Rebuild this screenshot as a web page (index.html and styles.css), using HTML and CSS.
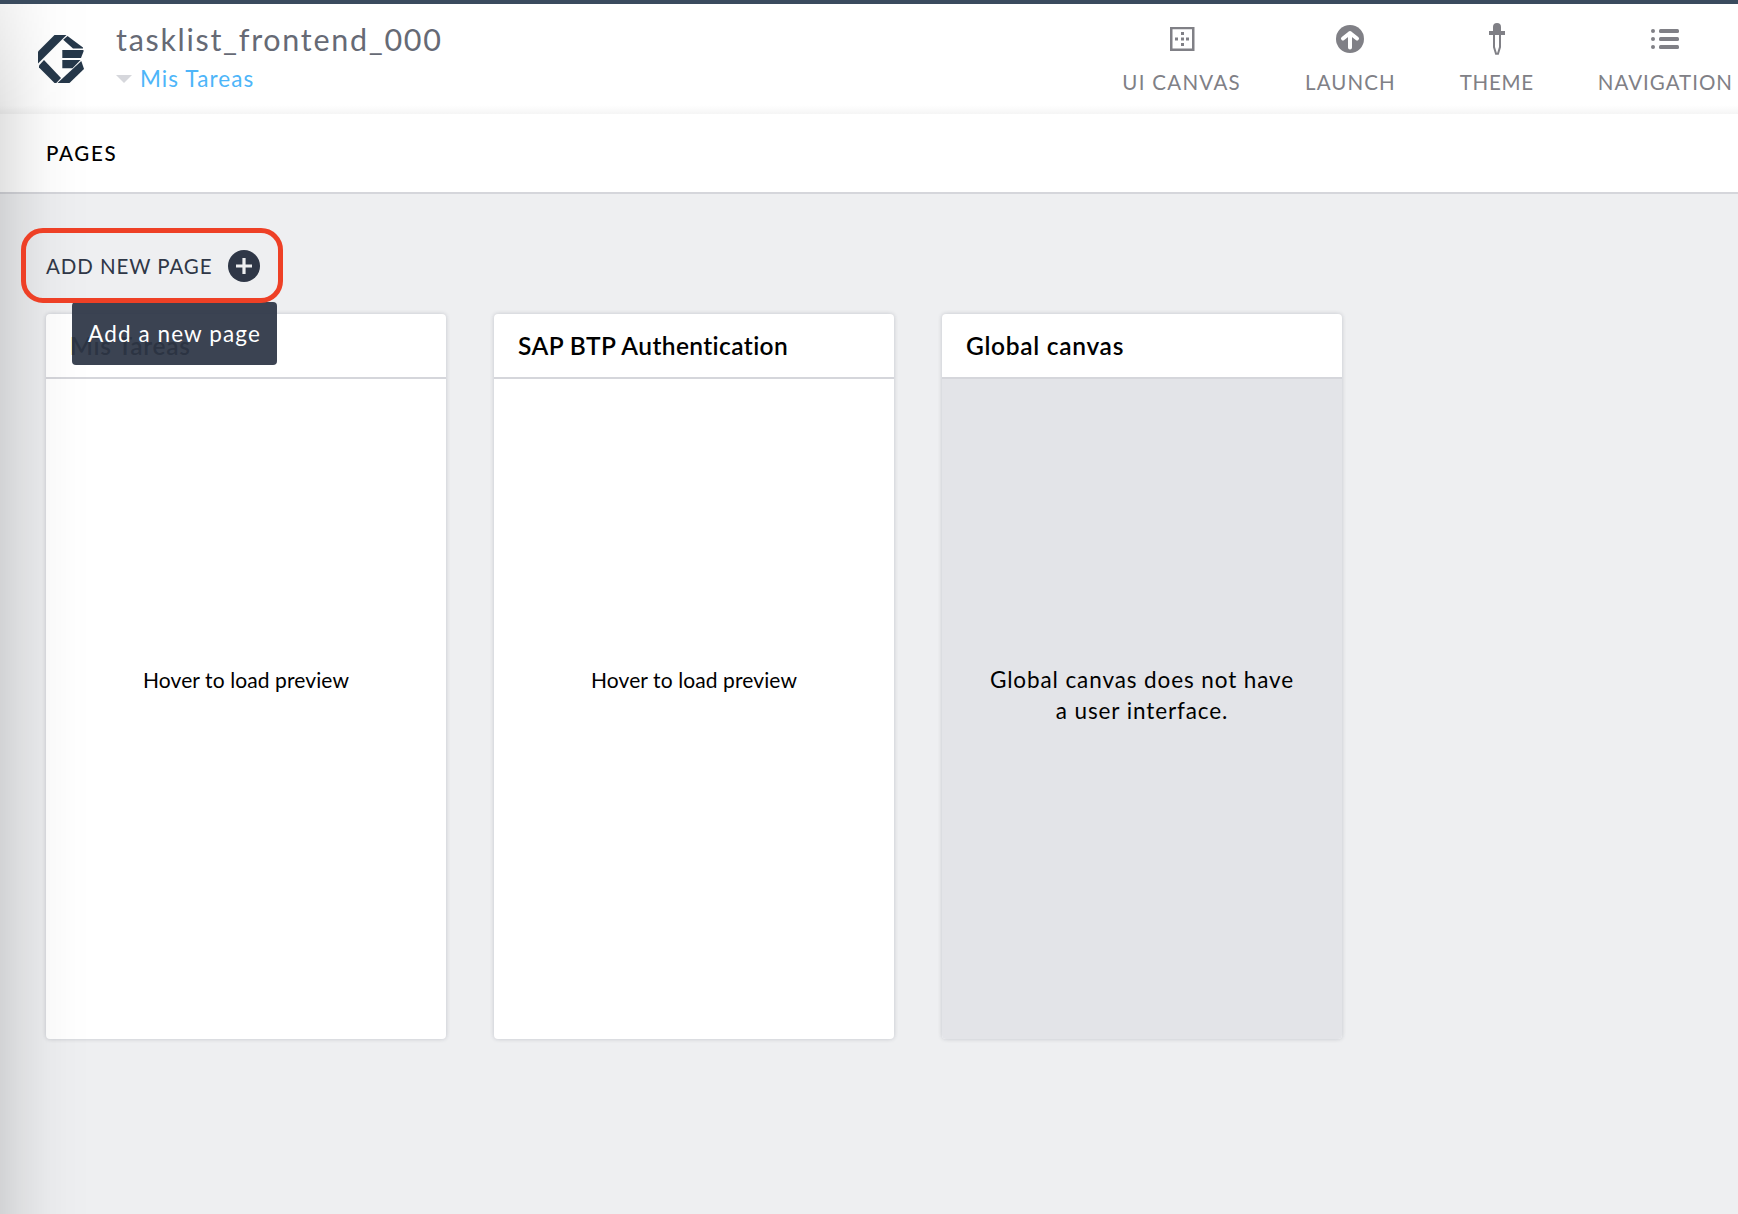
FILE: index.html
```
<!DOCTYPE html>
<html lang="en">
<head>
<meta charset="utf-8">
<title>tasklist_frontend_000</title>
<link rel="stylesheet" href="styles.css">
</head>
<body>
<header class="header">
  <div class="brand">
    <svg class="logo" width="46" height="48" viewBox="0 0 46 48">
      <g fill="#26384a">
        <path d="M16.500 0H28.500L0 28.500V16.500z"/>
        <path d="M29.500 1L45 12.500V13.500H35L25.200 4.800z"/>
        <path d="M24.300 15H45.500V16.500L43 23H24.300z"/>
        <path d="M24.300 25H42.500L34.500 33.300H24.300z"/>
        <path d="M43.300 26L46 34L31.500 48H19.500z"/>
        <path d="M1 30.500L6 25L23 43L18.300 48H16.500L1 32.500z"/>
      </g>
    </svg>
    <div class="titles">
      <h1 class="app-name">tasklist_frontend_000</h1>
      <a class="page-switch"><span class="caret"></span><span class="page-name">Mis Tareas</span></a>
    </div>
  </div>
  <nav class="nav">
    <a class="nav-item canvas">
      <svg class="icon" width="32" height="32" viewBox="0 0 32 32" fill="#808086"><path fill-rule="evenodd" d="M4 4H28.500V28H4zM6.500 6.300V25.500H26V6.300z"/><path d="M15 9h3v3h-3zM15 14.600h3v3h-3zM15 20h3v3h-3zM9 14.600h3v3H9zM20 14.600h3v3h-3z"/></svg>
      <span>UI CANVAS</span>
    </a>
    <a class="nav-item launch">
      <svg class="icon" width="32" height="32" viewBox="0 0 32 32"><circle cx="16" cy="16" r="14" fill="#808086"/><path d="M16 24.500V10M9 15.500L16 10L23 15.500" fill="none" stroke="#fff" stroke-width="4" stroke-linecap="round" stroke-linejoin="round"/></svg>
      <span>LAUNCH</span>
    </a>
    <a class="nav-item theme">
      <svg class="icon" width="32" height="32" viewBox="0 0 32 32"><path d="M12 8V4Q12 0 16 0Q20 0 20 4V8H24V12H8V8z" fill="#808086"/><path d="M13 11V24L15 30.800H17L19 24V11" fill="none" stroke="#808086" stroke-width="2"/></svg>
      <span>THEME</span>
    </a>
    <a class="nav-item navigation">
      <svg class="icon" width="32" height="32" viewBox="0 0 32 32" fill="#808086"><circle cx="4" cy="8" r="2"/><circle cx="4" cy="16" r="2"/><circle cx="4" cy="24" r="2"/><rect x="10" y="6" width="20" height="4" rx="1.500"/><rect x="10" y="14" width="20" height="4" rx="1.500"/><rect x="10" y="22" width="20" height="4" rx="1.500"/></svg>
      <span>NAVIGATION</span>
    </a>
  </nav>
</header>
<div class="section-bar">PAGES</div>
<main class="content">
  <div class="add-page">
    <button class="add-button">
      <span class="add-label">ADD NEW PAGE</span>
      <svg width="32" height="32" viewBox="0 0 32 32"><circle cx="16" cy="16" r="16" fill="#2f3747"/><path d="M16 8V24M8 16H24" stroke="#eeeff1" stroke-width="3.200"/></svg>
    </button>
    <div class="tooltip">Add a new page</div>
  </div>
  <div class="cards">
    <section class="card">
      <h2 class="card-title wide">Mis Tareas</h2>
      <p class="card-body hover">Hover to load preview</p>
    </section>
    <section class="card">
      <h2 class="card-title">SAP BTP Authentication</h2>
      <p class="card-body hover">Hover to load preview</p>
    </section>
    <section class="card">
      <h2 class="card-title wide">Global canvas</h2>
      <p class="card-body global">Global canvas does not have<br>a user interface.</p>
    </section>
  </div>
</main>
<div class="edge-shadow"></div>
</body>
</html>
```
FILE: styles.css
```
* { box-sizing: border-box; }
body {
  margin: 0;
  height: 1214px;
  overflow: hidden;
  display: flex;
  flex-direction: column;
  background: #eeeff1;
  color: #000;
  font-family: Lato, "Open Sans", sans-serif;
}
h1, h2, p { margin: 0; font-weight: 400; }

.header {
  flex: none;
  height: 114px;
  border-top: 4px solid #3a4b5e;
  background: linear-gradient(#fff 92%, #f5f5f5);
  display: flex;
  justify-content: space-between;
  padding: 0 5px 0 38px;
}
.brand { display: flex; gap: 32px; }
.logo { margin-top: 31px; }
.titles { display: flex; flex-direction: column; padding-top: 16px; }
.app-name {
  font-size: 30.5px;
  line-height: 38px;
  letter-spacing: 1.7px;
  color: #666a75;
}
.page-switch { display: flex; align-items: center; gap: 8px; margin-top: 7px; }
.caret {
  border: 8px solid transparent;
  border-top-color: #d6d7dc;
  border-bottom: 0;
}
.page-name { font-size: 22.5px; line-height: 28px; letter-spacing: 1.1px; color: #4db5f9; }

.nav { display: flex; gap: 64px; padding-top: 19px; }
.nav-item {
  display: flex;
  flex-direction: column;
  align-items: center;
  gap: 13px;
  font-size: 20.5px;
  line-height: 28px;
  color: #808086;
}
.canvas { letter-spacing: 1.3px; }
.launch { letter-spacing: 1.1px; }
.theme { letter-spacing: .7px; }
.navigation { letter-spacing: 1px; }
.icon { display: block; }

.section-bar {
  flex: none;
  height: 80px;
  padding: 25px 46px;
  background: #fff;
  border-bottom: 2px solid #d5d6db;
  font-size: 20.5px;
  line-height: 28px;
  letter-spacing: 1.7px;
  font-weight: 500;
}

.content { flex: 1; padding: 34px 46px 0 21px; }
.add-page { position: relative; height: 86px; }
.add-button {
  position: relative;
  z-index: 2;
  width: 262px;
  height: 75px;
  padding: 0 18px 0 20px;
  display: flex;
  align-items: center;
  justify-content: space-between;
  border: 5px solid #ee4026;
  border-radius: 22px;
  background: none;
  font: inherit;
  font-size: 20.5px;
  letter-spacing: .9px;
  color: #2f3747;
}
.tooltip {
  position: absolute;
  z-index: 1;
  left: 51px;
  top: 74px;
  width: 205px;
  height: 63px;
  border-radius: 4px;
  background: rgba(47, 55, 71, .94);
  color: #fff;
  text-align: center;
  font-size: 22.5px;
  line-height: 63px;
  letter-spacing: 1.1px;
  white-space: nowrap;
}

.cards { display: flex; gap: 48px; padding-left: 25px; }
.card {
  flex: none;
  width: 400px;
  height: 725px;
  border-radius: 4px;
  overflow: hidden;
  background: #fff;
  box-shadow: 0 0 4px rgba(40, 50, 70, .22);
  display: flex;
  flex-direction: column;
}
.card-title {
  height: 65px;
  padding: 0 24px;
  border-bottom: 2px solid #d5d6db;
  font-size: 24.5px;
  line-height: 64px;
  font-weight: 600;
  letter-spacing: .4px;
}
.wide { letter-spacing: .7px; }
.card-body { flex: 1; padding-top: 285px; text-align: center; line-height: 31px; }
.hover { font-size: 21px; letter-spacing: .1px; }
.global { background: #e3e4e8; font-size: 22.5px; letter-spacing: .9px; }

.edge-shadow {
  position: absolute;
  left: 0;
  top: 4px;
  width: 92px;
  height: 1210px;
  pointer-events: none;
  background: linear-gradient(90deg, rgba(0, 0, 0, .115), rgba(0, 0, 0, .06) 28%, rgba(0, 0, 0, .022) 52%, rgba(0, 0, 0, .006) 75%, transparent);
  -webkit-mask-image: linear-gradient(rgba(0, 0, 0, .5), #000 110px);
  mask-image: linear-gradient(rgba(0, 0, 0, .5), #000 110px);
}
```
